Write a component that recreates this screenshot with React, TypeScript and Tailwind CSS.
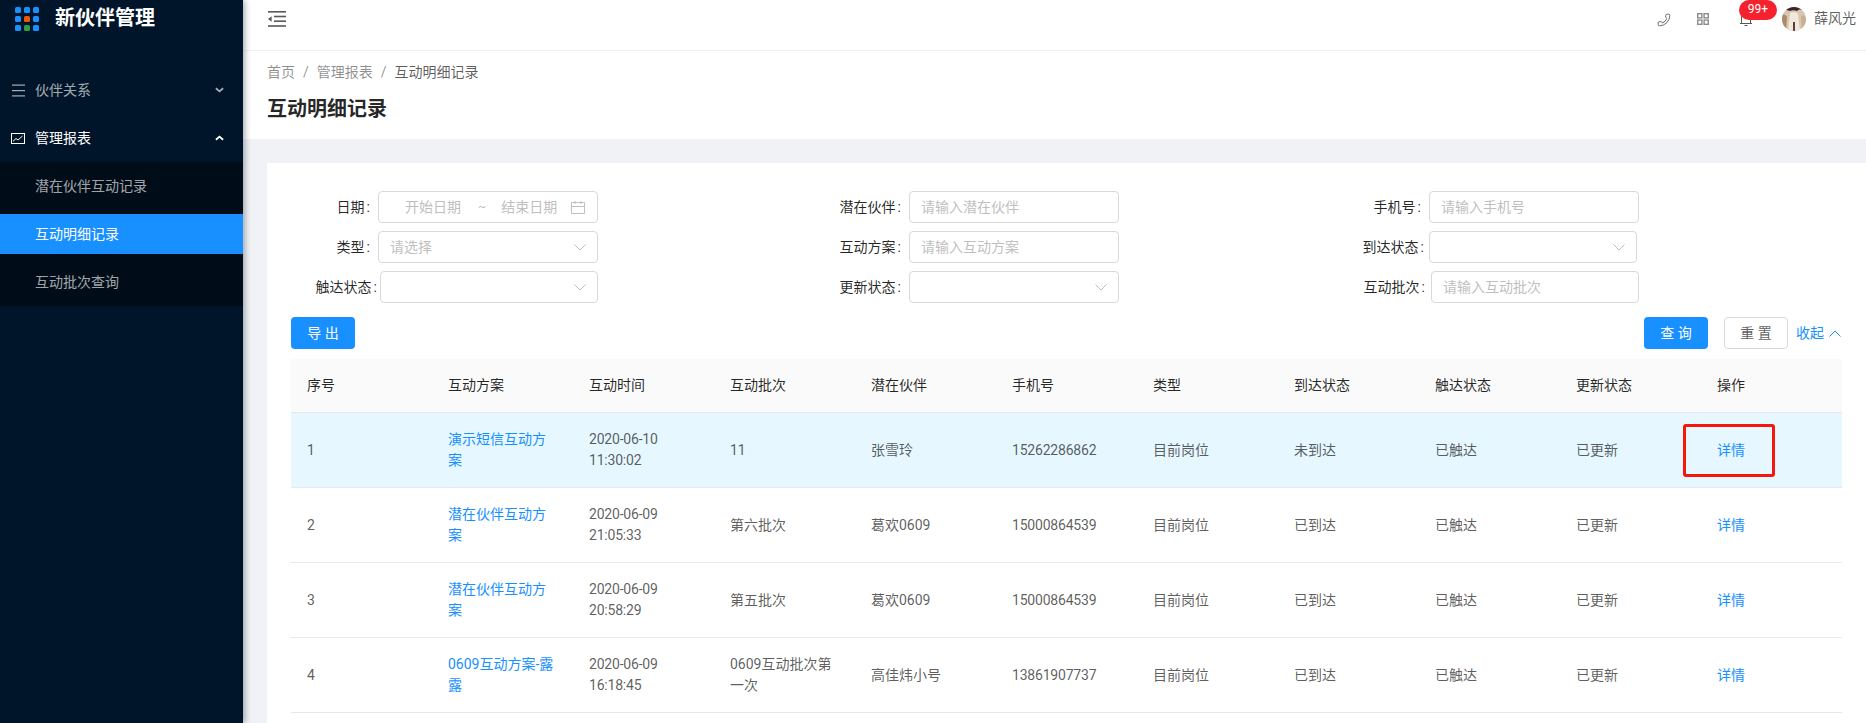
import { ReactNode } from "react";
import { Phone } from "lucide-react";

const rows = [
  { no: 1, plan: "演示短信互动方案", date: "2020-06-10", time: "11:30:02", batch: "11", name: "张雪玲", phone: "15262286862", reach: "未到达", selected: true },
  { no: 2, plan: "潜在伙伴互动方案", date: "2020-06-09", time: "21:05:33", batch: "第六批次", name: "葛欢0609", phone: "15000864539", reach: "已到达" },
  { no: 3, plan: "潜在伙伴互动方案", date: "2020-06-09", time: "20:58:29", batch: "第五批次", name: "葛欢0609", phone: "15000864539", reach: "已到达" },
  { no: 4, plan: "0609互动方案-露露", date: "2020-06-09", time: "16:18:45", batch: "0609互动批次第一次", name: "高佳炜小号", phone: "13861907737", reach: "已到达" },
];

const heads = ["序号", "互动方案", "互动时间", "互动批次", "潜在伙伴", "手机号", "类型", "到达状态", "触达状态", "更新状态", "操作"];

const logoDots = ["#1890ff", "#1890ff", "#1890ff", "#1890ff", "#e8590c", "#1890ff", "#1890ff", "#2f9e44", "#1890ff"];

function Chevron({ up, className }: { up?: boolean; className?: string }) {
  return (
    <svg viewBox="0 0 12 7" fill="none" stroke="currentColor" className={className}>
      <path d={up ? "M0.5 6.5 6 1l5.5 5.5" : "M0.5 0.5 6 6l5.5-5.5"} />
    </svg>
  );
}

function MenuChevron({ up }: { up?: boolean }) {
  return (
    <svg viewBox="0 0 10 6" fill="none" stroke="currentColor" strokeWidth="2" className="h-[6px] w-[9px]">
      <path d={up ? "M1 5 5 1.5 9 5" : "M1 1 5 4.5 9 1"} />
    </svg>
  );
}

function Field({ label, gap, width, children }: { label: string; gap: string; width: string; children: ReactNode }) {
  return (
    <div className="flex h-8 items-center justify-end">
      <span className="text-[#000000d9]">{label}</span>
      <span className={`ml-[2px] text-[#000000d9] ${gap}`}>:</span>
      <div className={`flex h-8 items-center rounded border border-[#d9d9d9] bg-white ${width}`}>{children}</div>
    </div>
  );
}

function TextInput({ placeholder }: { placeholder: string }) {
  return <input placeholder={placeholder} className="h-full w-full min-w-0 bg-transparent px-[11px] outline-none placeholder:text-[#bfbfbf]" />;
}

function SelectBox({ placeholder }: { placeholder?: string }) {
  return (
    <div className="flex h-full w-full items-center justify-between pl-[11px] pr-[11px] text-[#bfbfbf]">
      <span>{placeholder}</span>
      <Chevron className="h-[7px] w-3" />
    </div>
  );
}

function Sidebar() {
  return (
    <aside className="z-10 flex h-full w-[243px] shrink-0 flex-col bg-[#001529] text-[#ffffffa6] shadow-[2px_0_6px_rgba(0,21,41,0.35)]">
      <div className="flex h-[37px] items-center pl-[15px]">
        <div className="grid grid-cols-3 gap-[3px]">
          {logoDots.map((c, i) => (
            <span key={i} className="h-[6px] w-[6px] rounded-[1.5px]" style={{ backgroundColor: c }} />
          ))}
        </div>
        <span className="ml-[16px] text-[20px] font-bold text-white">新伙伴管理</span>
      </div>
      <div className="mt-[29px]">
        <div className="flex h-12 items-center justify-between pl-3 pr-[19px]">
          <div className="flex items-center">
            <svg viewBox="0 0 13 13" fill="currentColor" className="h-[13px] w-[13px]">
              <rect x="0" y="0.5" width="13" height="1.2" />
              <rect x="0" y="6" width="13" height="1.2" />
              <rect x="0" y="11.3" width="13" height="1.2" />
            </svg>
            <span className="ml-[10px]">伙伴关系</span>
          </div>
          <MenuChevron />
        </div>
        <div className="flex h-12 items-center justify-between pl-[11px] pr-[19px] text-white">
          <div className="flex items-center">
            <svg viewBox="0 0 14 11" fill="none" stroke="currentColor" className="h-[11px] w-[14px]">
              <rect x="0.5" y="0.5" width="13" height="10" strokeWidth="1" />
              <path d="M2 8.3 5 5.5l2 1.5 4.5-4" strokeWidth="1" />
            </svg>
            <span className="ml-[10px]">管理报表</span>
          </div>
          <MenuChevron up />
        </div>
        <div className="flex flex-col gap-2 bg-[#000c17] py-1">
          <div className="flex h-10 items-center pl-[35px]">潜在伙伴互动记录</div>
          <div className="flex h-10 items-center bg-[#1890ff] pl-[35px] text-white">互动明细记录</div>
          <div className="flex h-10 items-center pl-[35px]">互动批次查询</div>
        </div>
      </div>
    </aside>
  );
}

function Header() {
  return (
    <header className="h-[51px] shrink-0 border-b border-[#f0f0f0] bg-white">
      <div className="flex h-[37px] items-center justify-between pl-[25px] pr-[10px]">
        <svg viewBox="0 0 18 16" fill="#595959" className="h-4 w-[18px]">
          <rect x="0" y="0" width="18" height="1.6" />
          <rect x="6" y="4.7" width="12" height="1.6" />
          <rect x="6" y="9.4" width="12" height="1.6" />
          <rect x="0" y="14.2" width="18" height="1.6" />
          <path d="M0 8 3.6 5.2v5.6z" />
        </svg>
        <div className="flex items-center text-[#595959]">
          <Phone size={14} strokeWidth={1.5} className="mt-[3px] -scale-x-100" />
          <svg viewBox="0 0 12 12" fill="none" stroke="#8c8c8c" strokeWidth="1.4" className="ml-[26px] h-3 w-3">
            <rect x="0.7" y="0.7" width="4.2" height="4.2" />
            <rect x="7.1" y="0.7" width="4.2" height="4.2" />
            <rect x="0.7" y="7.1" width="4.2" height="4.2" />
            <rect x="7.1" y="7.1" width="4.2" height="4.2" />
          </svg>
          <div className="relative ml-[31px] h-[16px] w-3">
            <svg viewBox="0 0 12 16" fill="none" stroke="currentColor" className="h-4 w-3">
              <path d="M1.5 12.5V6a4.5 4.5 0 0 1 9 0v6.5M0 12.5h12M4.5 14.5h3" />
            </svg>
            <span className="absolute left-[-1px] top-[-11px] flex h-5 w-[38px] items-center justify-center rounded-[10px] bg-[#f5222d] text-[12px] text-white">99+</span>
          </div>
          <svg viewBox="0 0 24 24" className="ml-[30px] h-6 w-6 rounded-full">
            <rect width="24" height="24" fill="#d9c6ae" />
            <path d="M3 0h18v3c-3-1-5 0-6 1-2-1-5-1-7 0-2-1-3-1-5-1z" fill="#3b2233" />
            <path d="M8 6c2-1 6-1 8 1l2 17H6z" fill="#f0e8da" />
            <path d="M0 8c3-1 4 0 5 2L4 24H0z" fill="#a88a6e" />
            <path d="M11 15h2v9h-2z" fill="#5e3b3f" />
            <path d="M19 9c2-1 4 0 5 2v13h-4z" fill="#c9ae92" />
          </svg>
          <span className="ml-2 text-[#000000a6]">薛风光</span>
        </div>
      </div>
    </header>
  );
}

function Filters() {
  return (
    <div className="grid grid-cols-[307px_521px_520px] gap-y-2">
      <Field label="日期" gap="mr-2" width="w-[220px]">
        <div className="flex w-full items-center pl-[26px] text-[#bfbfbf]">
          <span>开始日期</span>
          <span className="ml-[17px] text-[12px]">~</span>
          <span className="ml-[15px]">结束日期</span>
          <svg viewBox="0 0 14 13" fill="none" stroke="currentColor" className="ml-[14px] h-[13px] w-[14px]">
            <path d="M0.5 1.5h13v11h-13zM0.5 5.5h13M4 0v3M10 0v3" />
          </svg>
        </div>
      </Field>
      <Field label="潜在伙伴" gap="mr-2" width="w-[210px]"><TextInput placeholder="请输入潜在伙伴" /></Field>
      <Field label="手机号" gap="mr-2" width="w-[210px]"><TextInput placeholder="请输入手机号" /></Field>
      <Field label="类型" gap="mr-2" width="w-[220px]"><SelectBox placeholder="请选择" /></Field>
      <Field label="互动方案" gap="mr-2" width="w-[210px]"><TextInput placeholder="请输入互动方案" /></Field>
      <div className="mr-[2px]">
        <Field label="到达状态" gap="mr-[5px]" width="w-[208px]"><SelectBox /></Field>
      </div>
      <Field label="触达状态" gap="mr-[3px]" width="w-[218px]"><SelectBox /></Field>
      <Field label="更新状态" gap="mr-2" width="w-[210px]"><SelectBox /></Field>
      <Field label="互动批次" gap="mr-[6px]" width="w-[208px]"><TextInput placeholder="请输入互动批次" /></Field>
    </div>
  );
}

function Table() {
  return (
    <table className="mt-[10px] w-full table-fixed border-collapse">
      <thead>
        <tr className="h-[53px] bg-[#fafafa] text-[#000000d9]">
          {heads.map((h) => (
            <th key={h} className="border-b border-[#e8e8e8] p-4 text-left font-normal">{h}</th>
          ))}
        </tr>
      </thead>
      <tbody className="text-[#000000a6]">
        {rows.map((r) => (
          <tr key={r.no} className={`h-[75px] ${r.selected ? "bg-[#e6f7ff]" : "bg-white"}`}>
            <td className="border-b border-[#e8e8e8] p-4">{r.no}</td>
            <td className="border-b border-[#e8e8e8] p-4 text-[#1890ff]">{r.plan}</td>
            <td className="border-b border-[#e8e8e8] p-4 tracking-[-0.2px]">
              {r.date}
              <br />
              {r.time}
            </td>
            <td className="border-b border-[#e8e8e8] p-4">{r.batch}</td>
            <td className="border-b border-[#e8e8e8] p-4">{r.name}</td>
            <td className="border-b border-[#e8e8e8] p-4 tracking-[-0.2px]">{r.phone}</td>
            <td className="border-b border-[#e8e8e8] p-4">目前岗位</td>
            <td className="border-b border-[#e8e8e8] p-4">{r.reach}</td>
            <td className="border-b border-[#e8e8e8] p-4">已触达</td>
            <td className="border-b border-[#e8e8e8] p-4">已更新</td>
            <td className="relative border-b border-[#e8e8e8] p-4 text-[#1890ff]">
              详情
              {r.selected && <span className="absolute left-[-18px] top-[11px] h-[53px] w-[92px] rounded-[3px] border-[3px] border-[#f5160c]" />}
            </td>
          </tr>
        ))}
      </tbody>
    </table>
  );
}

export default function App() {
  return (
    <div className="flex h-[723px] w-[1866px] overflow-hidden bg-[#f0f2f5] font-[Roboto,'Noto_Sans_CJK_SC',sans-serif] text-[14px] leading-[21px]">
      <Sidebar />
      <main className="flex min-w-0 flex-1 flex-col">
        <Header />
        <div className="h-[88px] shrink-0 bg-white pl-[24px] pt-[11px]">
          <div className="flex h-[21px] items-center text-[#00000073]">
            <span>首页</span>
            <span className="mx-[8px]">/</span>
            <span>管理报表</span>
            <span className="mx-[8px]">/</span>
            <span className="text-[#000000a6]">互动明细记录</span>
          </div>
          <h1 className="mt-[10px] text-[20px] font-semibold leading-[32px] text-[#000000d9]">互动明细记录</h1>
        </div>
        <section className="ml-[24px] mt-[24px] flex-1 bg-white px-[24px] pt-[28px]">
          <Filters />
          <div className="mt-[14px] flex h-8 items-center justify-between">
            <button className="h-8 w-16 rounded bg-[#1890ff] text-white">导 出</button>
            <div className="mr-[1px] flex items-center">
              <button className="h-8 w-16 rounded bg-[#1890ff] text-white">查 询</button>
              <button className="ml-4 h-8 w-16 rounded border border-[#d9d9d9] bg-white text-[#000000a6]">重 置</button>
              <span className="ml-[8px] text-[#1890ff]">收起</span>
              <Chevron up className="ml-[5px] h-[7px] w-3 text-[#1890ff]" />
            </div>
          </div>
          <Table />
        </section>
      </main>
    </div>
  );
}
